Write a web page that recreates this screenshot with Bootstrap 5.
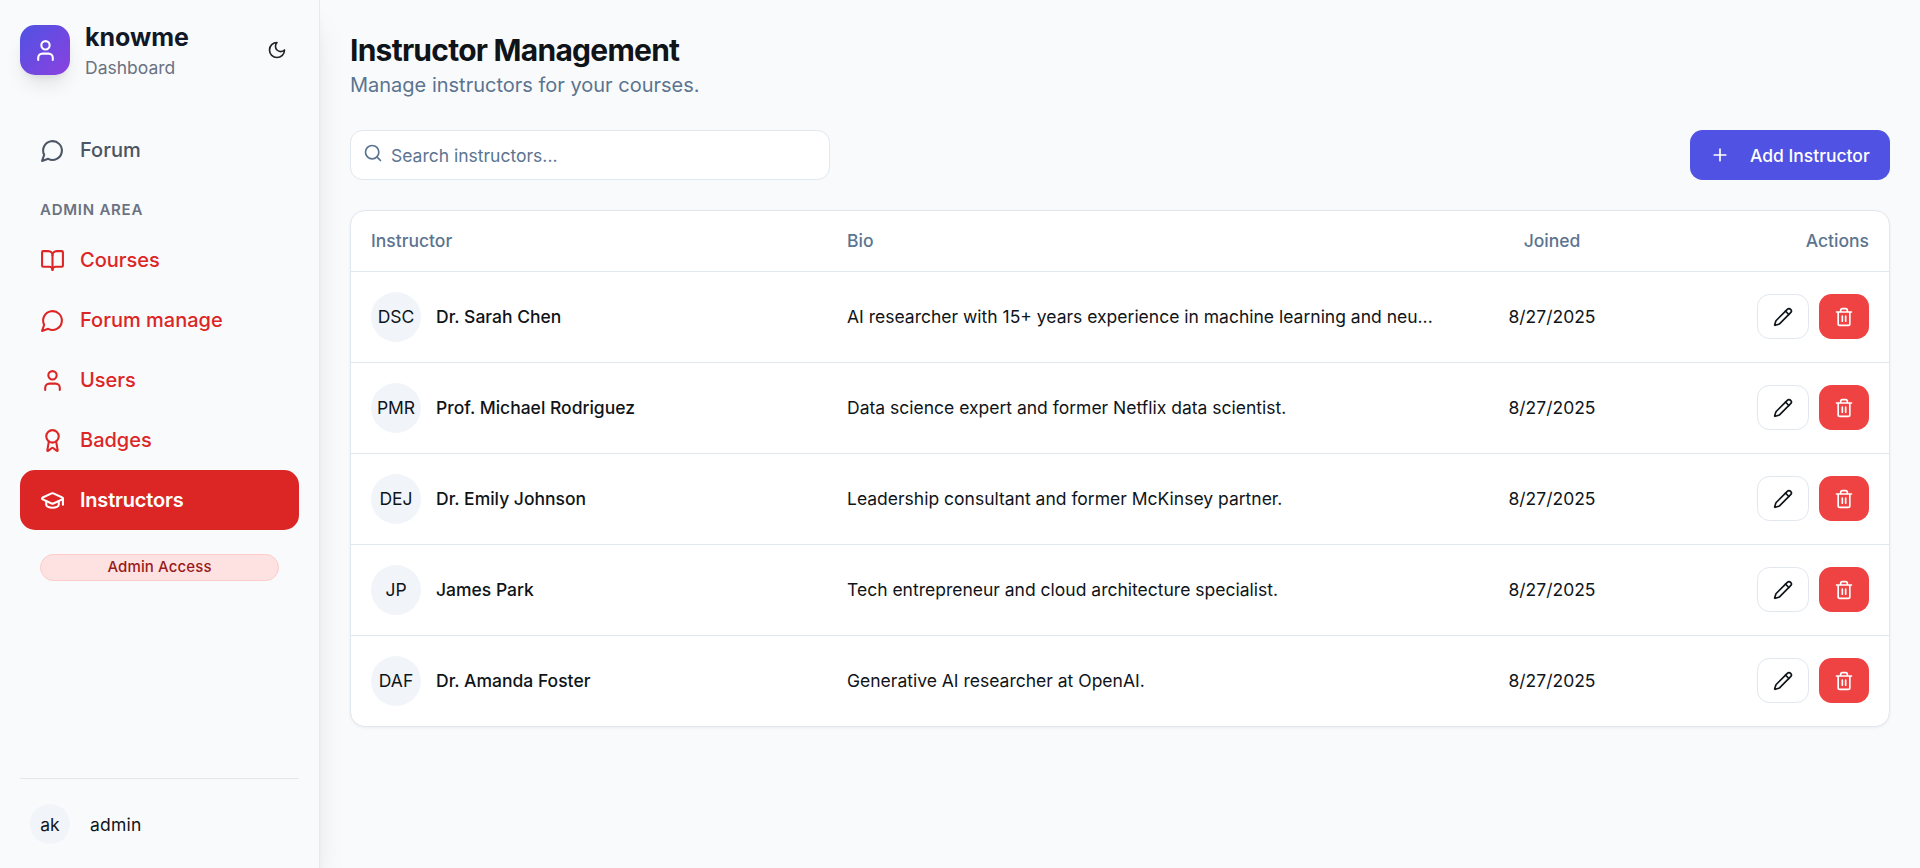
<!DOCTYPE html>
<html lang="en">
<head>
<meta charset="utf-8">
<meta name="viewport" content="width=device-width, initial-scale=1">
<title>knowme – Instructor Management</title>
<link href="https://cdn.jsdelivr.net/npm/bootstrap@5.3.0/dist/css/bootstrap.min.css" rel="stylesheet">
<style>
body{font-family:Inter,"Liberation Sans",sans-serif;background:#f9fafc;color:#0f1419;font-size:17.5px;line-height:25px;overflow:hidden}
svg{fill:none;stroke:currentColor;stroke-width:2;stroke-linecap:round;stroke-linejoin:round;flex:none}
.i20{width:20px;height:20px}
.i25{width:25px;height:25px}
.sidebar{width:320px;border-right:1px solid #e8eaee;box-shadow:0 25px 31px -6px rgba(0,0,0,.1),0 10px 12px -7px rgba(0,0,0,.1);background:#f9fafc}
.brand{padding:20px 20px 40px;gap:15px}
.logo{width:50px;height:50px;border-radius:15px;background:linear-gradient(135deg,#4f52e2,#8b41e0);box-shadow:0 12px 19px -4px rgba(0,0,0,.1),0 5px 8px -5px rgba(0,0,0,.1)}
.brand-name{font-size:25px;line-height:35px;font-weight:700;color:#111827}
.gray{color:#6b7280}
.theme-btn{width:45px;height:45px}
.side-link{height:60px;padding:0 20px;gap:15px;border-radius:15px;font-size:20px;font-weight:500;color:#dc2626}
.side-link.plain{color:#4b5563}
.side-link.active{background:#dc2626;color:#fff;font-weight:600;letter-spacing:-.2px}
.side-label{font-size:15px;line-height:20px;font-weight:600;letter-spacing:.75px;padding:20px 20px 10px;color:#6b7280}
.access{margin:24px 20px 0;height:27px;border:1px solid #fecaca;background:#fee2e2;color:#991b1b;border-radius:14px;font-size:15px;line-height:24px;font-weight:500;letter-spacing:.12px}
.account{margin:0 20px;border-top:1px solid #e5e7eb;padding:25px 10px 24px;gap:20px}
.account-name{letter-spacing:.2px}
.avatar{border-radius:50%;background:#f1f5f9;width:50px;height:50px}
.avatar.sm{width:40px;height:40px}
main{padding:30px}
h1{font-size:30px;line-height:40px;font-weight:700;letter-spacing:-.75px}
.sub{font-size:20px;line-height:30px}
.muted{color:#5b7490}
.toolbar{margin:30px 0}
.search{width:480px;height:50px;border:1px solid #e1e7ef;border-radius:12.5px;background:#fff;padding:0 12px}
.search input{font-size:17.5px;padding:3px 0 0;color:#0f1419}
.search input::placeholder{color:#5b7490;opacity:1}
.search svg{margin-top:-4px}
.add{width:200px;height:50px;border-radius:12.5px;background:#4f52e2;color:#fff;font-weight:500;font-size:17.5px;gap:20px;padding:0 20px;border:0}
.add span{padding-top:2px}
.panel{border:1px solid #e1e7ef;border-radius:15px;background:#fff;box-shadow:0 1px 3px rgba(0,0,0,.06)}
.panel table{table-layout:fixed;border-collapse:separate;border-spacing:0;color:#0f1419}
.panel th,.panel td{padding:0 20px 1px;border-bottom:1px solid #e1e7ef;vertical-align:middle}
.panel td:first-child{padding-bottom:0}
.panel th{height:61px;font-weight:500;color:#5b7490}
.panel td{height:91px}
.panel tr:last-child td{height:90px;border-bottom:0}
.c-name{width:476px}.c-bio{width:629px}.c-joined{width:192px}
.person{gap:15px;font-weight:500}
.person .avatar{font-weight:400}
.person .avatar,.person span{padding-bottom:1px}
.actions{gap:10px}
.edit,.del{height:45px;border-radius:12.5px;padding:0}
.edit{width:52px;border:1px solid #e1e7ef;color:#0f1419;background:#fff}
.del{width:50px;background:#ef4343;color:#fff;border:0}
</style>
</head>
<body>
<svg width="0" height="0" class="position-absolute" aria-hidden="true">
  <symbol id="user" viewBox="0 0 24 24"><path d="M19 21v-2a4 4 0 0 0-4-4H9a4 4 0 0 0-4 4v2"/><circle cx="12" cy="7" r="4"/></symbol>
  <symbol id="moon" viewBox="0 0 24 24"><path d="M12 3a6 6 0 0 0 9 9 9 9 0 1 1-9-9Z"/></symbol>
  <symbol id="chat" viewBox="0 0 24 24"><path d="M7.9 20A9 9 0 1 0 4 16.1L2 22Z"/></symbol>
  <symbol id="book" viewBox="0 0 24 24"><path d="M12 7v14"/><path d="M3 18a1 1 0 0 1-1-1V4a1 1 0 0 1 1-1h5a4 4 0 0 1 4 4 4 4 0 0 1 4-4h5a1 1 0 0 1 1 1v13a1 1 0 0 1-1 1h-6a3 3 0 0 0-3 3 3 3 0 0 0-3-3z"/></symbol>
  <symbol id="award" viewBox="0 0 24 24"><path d="m15.477 12.89 1.515 8.526a.5.5 0 0 1-.81.47l-3.58-2.687a1 1 0 0 0-1.197 0l-3.586 2.686a.5.5 0 0 1-.81-.469l1.514-8.526"/><circle cx="12" cy="8" r="6"/></symbol>
  <symbol id="cap" viewBox="0 0 24 24"><path d="M21.42 10.922a1 1 0 0 0-.019-1.838L12.83 5.18a2 2 0 0 0-1.66 0L2.6 9.08a1 1 0 0 0 0 1.832l8.57 3.908a2 2 0 0 0 1.66 0z"/><path d="M22 10v6"/><path d="M6 12.5V16a6 3 0 0 0 12 0v-3.5"/></symbol>
  <symbol id="search" viewBox="0 0 24 24"><circle cx="11" cy="11" r="8"/><path d="m21 21-4.3-4.3"/></symbol>
  <symbol id="plus" viewBox="0 0 24 24"><path d="M5 12h14M12 5v14"/></symbol>
  <symbol id="pencil" viewBox="0 0 24 24"><path d="M21.174 6.812a1 1 0 0 0-3.986-3.987L3.842 16.174a2 2 0 0 0-.5.83l-1.321 4.352a.5.5 0 0 0 .623.622l4.353-1.32a2 2 0 0 0 .83-.497z"/><path d="m15 5 4 4"/></symbol>
  <symbol id="trash" viewBox="0 0 24 24"><path d="M3 6h18M19 6v14a2 2 0 0 1-2 2H7a2 2 0 0 1-2-2V6M8 6V4a2 2 0 0 1 2-2h4a2 2 0 0 1 2 2v2M10 11v6M14 11v6"/></symbol>
</svg>
<div class="d-flex vh-100">
  <aside class="sidebar d-flex flex-column flex-shrink-0">
    <div class="brand d-flex align-items-center">
      <div class="logo d-flex align-items-center justify-content-center text-white"><svg class="i25"><use href="#user"/></svg></div>
      <div class="flex-grow-1">
        <div class="brand-name">knowme</div>
        <div class="gray">Dashboard</div>
      </div>
      <button class="theme-btn btn p-0 border-0 d-flex align-items-center justify-content-center" aria-label="Toggle theme"><svg class="i20"><use href="#moon"/></svg></button>
    </div>
    <nav class="px-3 mx-1 d-flex flex-column flex-grow-1">
      <a class="side-link plain d-flex align-items-center text-decoration-none" href="#"><svg class="i25"><use href="#chat"/></svg>Forum</a>
      <div class="side-label text-uppercase">Admin Area</div>
      <a class="side-link d-flex align-items-center text-decoration-none" href="#"><svg class="i25"><use href="#book"/></svg>Courses</a>
      <a class="side-link d-flex align-items-center text-decoration-none" href="#"><svg class="i25"><use href="#chat"/></svg>Forum manage</a>
      <a class="side-link d-flex align-items-center text-decoration-none" href="#"><svg class="i25"><use href="#user"/></svg>Users</a>
      <a class="side-link d-flex align-items-center text-decoration-none" href="#"><svg class="i25"><use href="#award"/></svg>Badges</a>
      <a class="side-link active d-flex align-items-center text-decoration-none" href="#"><svg class="i25"><use href="#cap"/></svg>Instructors</a>
      <div class="access text-center">Admin Access</div>
    </nav>
    <div class="account d-flex align-items-center">
      <div class="avatar sm d-flex align-items-center justify-content-center">ak</div>
      <span class="account-name">admin</span>
    </div>
  </aside>
  <main class="flex-grow-1">
    <h1 class="m-0">Instructor Management</h1>
    <p class="sub muted m-0">Manage instructors for your courses.</p>
    <div class="toolbar d-flex justify-content-between">
      <div class="search d-flex align-items-center gap-2">
        <svg class="i20 muted"><use href="#search"/></svg>
        <input class="form-control border-0 bg-transparent shadow-none" type="text" placeholder="Search instructors...">
      </div>
      <button class="add btn d-flex align-items-center"><svg class="i20"><use href="#plus"/></svg><span class="text-nowrap">Add Instructor</span></button>
    </div>
    <div class="panel">
      <table class="w-100">
        <colgroup><col class="c-name"><col class="c-bio"><col class="c-joined"><col></colgroup>
        <thead><tr><th>Instructor</th><th>Bio</th><th class="text-center">Joined</th><th class="text-end">Actions</th></tr></thead>
        <tbody id="rows"></tbody>
      </table>
    </div>
  </main>
</div>
<script src="https://cdn.jsdelivr.net/npm/bootstrap@5.3.0/dist/js/bootstrap.bundle.min.js"></script>
<script>
const people=[
 ["DSC","Dr. Sarah Chen","AI researcher with 15+ years experience in machine learning and neu..."],
 ["PMR","Prof. Michael Rodriguez","Data science expert and former Netflix data scientist."],
 ["DEJ","Dr. Emily Johnson","Leadership consultant and former McKinsey partner."],
 ["JP","James Park","Tech entrepreneur and cloud architecture specialist."],
 ["DAF","Dr. Amanda Foster","Generative AI researcher at OpenAI."]];
document.getElementById("rows").innerHTML=people.map(([a,n,b])=>`<tr>
<td><div class="person d-flex align-items-center"><div class="avatar d-flex align-items-center justify-content-center">${a}</div><span>${n}</span></div></td>
<td class="text-nowrap">${b}</td>
<td class="text-center">8/27/2025</td>
<td><div class="actions d-flex justify-content-end"><button class="edit btn d-flex align-items-center justify-content-center" aria-label="Edit"><svg class="i20"><use href="#pencil"/></svg></button><button class="del btn d-flex align-items-center justify-content-center" aria-label="Delete"><svg class="i20"><use href="#trash"/></svg></button></div></td></tr>`).join("");
</script>
</body>
</html>
